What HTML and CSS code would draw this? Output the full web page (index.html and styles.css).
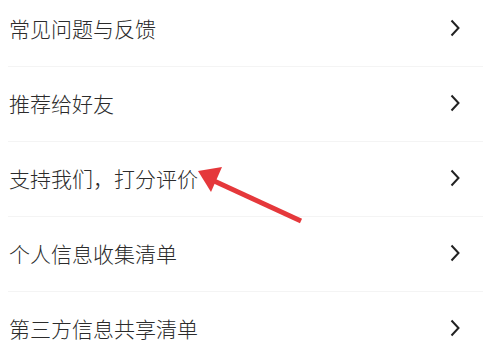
FILE: index.html
```html
<!DOCTYPE html>
<html lang="zh-CN">
<head>
    <meta charset="UTF-8">
    <meta name="viewport" content="width=device-width, initial-scale=1.0">
    <title>设置</title>
    <link rel="stylesheet" href="styles.css">
</head>
<body>
    <ul class="menu">
        <li class="menu-item"><span class="label">常见问题与反馈</span><svg class="chevron" viewBox="0 0 10 18"><path d="M1.5 1.5 L8.5 9 L1.5 16.5"/></svg></li>
        <li class="menu-item"><span class="label">推荐给好友</span><svg class="chevron" viewBox="0 0 10 18"><path d="M1.5 1.5 L8.5 9 L1.5 16.5"/></svg></li>
        <li class="menu-item"><span class="label">支持我们，打分评价</span><svg class="chevron" viewBox="0 0 10 18"><path d="M1.5 1.5 L8.5 9 L1.5 16.5"/></svg></li>
        <li class="menu-item"><span class="label">个人信息收集清单</span><svg class="chevron" viewBox="0 0 10 18"><path d="M1.5 1.5 L8.5 9 L1.5 16.5"/></svg></li>
        <li class="menu-item"><span class="label">第三方信息共享清单</span><svg class="chevron" viewBox="0 0 10 18"><path d="M1.5 1.5 L8.5 9 L1.5 16.5"/></svg></li>
    </ul>

    <!-- annotation arrow pointing at the rating row -->
    <svg class="pointer" viewBox="0 0 483 358">
        <line x1="301" y1="221" x2="212" y2="180" stroke="#e5383b" stroke-width="5" stroke-linecap="butt"/>
        <polygon points="198,171 222,167 211,192" fill="#e5383b"/>
    </svg>
</body>
</html>
```

FILE: styles.css
```css
body, html {
    margin: 0;
    padding: 0;
    background-color: #fff;
    font-family: "Noto Sans CJK SC", "Noto Sans", sans-serif;
}
body {
    position: relative;
    height: 358px;
    overflow: hidden;
}
.menu {
    list-style: none;
    margin: -8px 0 0 8px;
    padding: 0;
}
.menu-item {
    display: flex;
    align-items: center;
    justify-content: space-between;
    box-sizing: border-box;
    height: 75px;
    padding: 0 23px 3px 1px;
    border-bottom: 1px solid #f4f4f4;
}
.label {
    font-size: 21px;
    font-weight: 300;
    color: #2b2b2b;
}
.chevron {
    width: 10px;
    height: 18px;
    fill: none;
    stroke: #222;
    stroke-width: 2;
}
.pointer {
    position: absolute;
    left: 0;
    top: 0;
    width: 483px;
    height: 358px;
}
```
